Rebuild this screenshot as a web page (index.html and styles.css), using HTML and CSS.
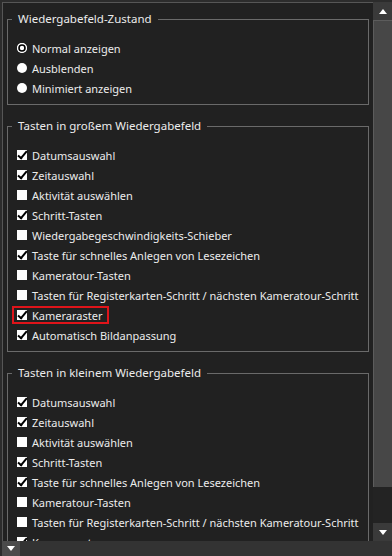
FILE: index.html
```html
<!DOCTYPE html>
<html lang="de">
<head>
<meta charset="utf-8">
<title>Wiedergabefeld</title>
<link rel="stylesheet" href="styles.css">
</head>
<body>
<div class="app">
  <div class="content">
    <fieldset class="group">
      <legend>Wiedergabefeld-Zustand</legend>
      <div class="items">
        <div class="row"><span class="radio on"><svg width="10" height="10" viewBox="0 0 10 10"><circle cx="5" cy="5" r="5" fill="#fff"/><circle cx="5" cy="5" r="3" fill="#fff" stroke="#000" stroke-width="1.6"/></svg></span><span>Normal anzeigen</span></div>
        <div class="row"><span class="radio"></span><span>Ausblenden</span></div>
        <div class="row"><span class="radio"></span><span>Minimiert anzeigen</span></div>
      </div>
    </fieldset>

    <fieldset class="group">
      <legend>Tasten in großem Wiedergabefeld</legend>
      <div class="items">
        <div class="row"><span class="check on"></span><span>Datumsauswahl</span></div>
        <div class="row"><span class="check on"></span><span>Zeitauswahl</span></div>
        <div class="row"><span class="check"></span><span>Aktivität auswählen</span></div>
        <div class="row"><span class="check on"></span><span>Schritt-Tasten</span></div>
        <div class="row"><span class="check"></span><span>Wiedergabegeschwindigkeits-Schieber</span></div>
        <div class="row"><span class="check on"></span><span>Taste für schnelles Anlegen von Lesezeichen</span></div>
        <div class="row"><span class="check"></span><span>Kameratour-Tasten</span></div>
        <div class="row"><span class="check"></span><span>Tasten für Registerkarten-Schritt / nächsten Kameratour-Schritt</span></div>
        <div class="row highlight"><span class="check on"></span><span>Kameraraster</span></div>
        <div class="row"><span class="check on"></span><span>Automatisch Bildanpassung</span></div>
      </div>
    </fieldset>

    <fieldset class="group">
      <legend>Tasten in kleinem Wiedergabefeld</legend>
      <div class="items">
        <div class="row"><span class="check on"></span><span>Datumsauswahl</span></div>
        <div class="row"><span class="check on"></span><span>Zeitauswahl</span></div>
        <div class="row"><span class="check"></span><span>Aktivität auswählen</span></div>
        <div class="row"><span class="check on"></span><span>Schritt-Tasten</span></div>
        <div class="row"><span class="check on"></span><span>Taste für schnelles Anlegen von Lesezeichen</span></div>
        <div class="row"><span class="check"></span><span>Kameratour-Tasten</span></div>
        <div class="row"><span class="check"></span><span>Tasten für Registerkarten-Schritt / nächsten Kameratour-Schritt</span></div>
        <div class="row"><span class="check on"></span><span>Kameraraster</span></div>
        <div class="row"><span class="check on"></span><span>Automatisch Bildanpassung</span></div>
      </div>
    </fieldset>
  </div>

  <div class="vscroll">
    <div class="sb-btn"><svg width="8" height="5" viewBox="0 0 8 5"><polygon points="4,0 8,5 0,5" fill="#fff"/></svg></div>
    <div class="sb-thumb"></div>
    <div class="sb-track"></div>
    <div class="sb-btn"><svg width="8" height="5" viewBox="0 0 8 5"><polygon points="0,0 8,0 4,5" fill="#fff"/></svg></div>
  </div>

  <div class="hbar">
    <div class="hbar-btn"><svg width="8" height="5" viewBox="0 0 8 5"><polygon points="0,0 8,0 4,5" fill="#fff"/></svg></div>
  </div>
</div>
</body>
</html>
```

FILE: styles.css
```css
* { box-sizing: border-box; }

html, body {
  margin: 0;
  padding: 0;
}

body {
  width: 392px;
  height: 556px;
  overflow: hidden;
  background: #2c2c2c;
  font-family: "Noto Sans", "Open Sans", sans-serif;
  font-size: 11px;
  color: #ececec;
}

.app {
  height: 556px;
  padding: 2px 0 0 2px;
  display: grid;
  grid-template-columns: 1fr 19px;
  grid-template-rows: 1fr 15px;
}

.content {
  background: #212121;
  border-left: 1px solid #565656;
  border-top: 1px solid #565656;
  padding: 8px 4px 0 4px;
  overflow: hidden;
}

.group {
  margin: 0 0 13px 0;
  padding: 0 4px 6px 4px;
  border: 1px solid #6a6a6a;
}

.group legend {
  padding: 0 6px;
  font-size: 11.5px;
  line-height: 16px;
  color: #ececec;
}

.items {
  padding: 11px 0 0 5px;
}

.row {
  display: flex;
  align-items: center;
  gap: 5px;
  height: 20px;
  white-space: nowrap;
  width: max-content;
}

.radio {
  width: 10px;
  height: 10px;
  border-radius: 50%;
  background: #fff;
  flex: none;
}

.radio svg { display: block; }

.check {
  width: 10px;
  height: 10px;
  background: #fff;
  flex: none;
  position: relative;
}

.check.on::after {
  content: "";
  position: absolute;
  left: 3px;
  top: -1px;
  width: 3px;
  height: 8px;
  border-right: 2px solid #000;
  border-bottom: 2px solid #000;
  transform: rotate(40deg);
}

.highlight {
  position: relative;
}

.highlight::after {
  content: "";
  position: absolute;
  left: -5px;
  right: -7px;
  top: 1px;
  bottom: 1px;
  border: 2px solid #e0141a;
}

.vscroll {
  display: flex;
  flex-direction: column;
  background: #222;
}

.sb-btn {
  height: 18px;
  flex: none;
  background: #3a3a3a;
  display: flex;
  align-items: center;
  justify-content: center;
}

.sb-btn svg { display: block; }

.sb-thumb {
  height: 467px;
  flex: none;
  background: #474747;
  border-left: 1px solid #5c5c5c;
  border-top: 1px solid #5c5c5c;
}

.sb-track {
  flex: 1;
  background: #232323;
}

.hbar {
  grid-column: 1 / -1;
  background: #333;
  display: flex;
}

.hbar-btn {
  width: 18px;
  background: #4b4b4b;
  display: flex;
  align-items: center;
  justify-content: center;
}

.hbar-btn svg { display: block; }
```
